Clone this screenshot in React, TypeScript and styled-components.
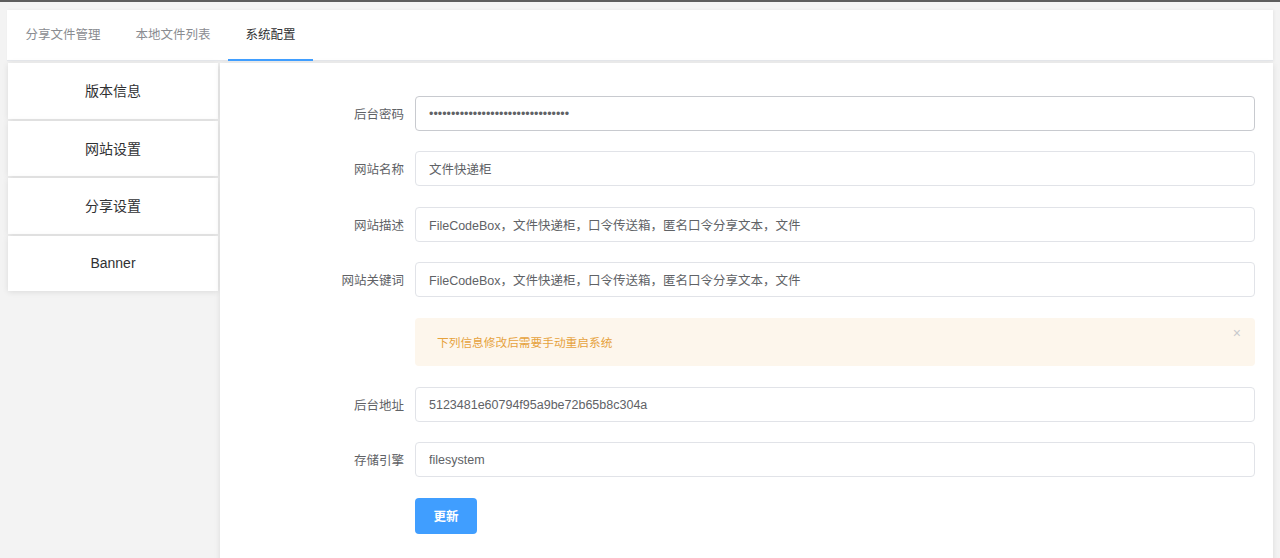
import React from "react";
import styled, { createGlobalStyle } from "styled-components";

const Global = createGlobalStyle`
  html, body { margin: 0; padding: 0; }
  body {
    background: #f3f3f3;
    font-family: "Liberation Sans", "Noto Sans CJK SC", sans-serif;
    color: #303133;
  }
  * { box-sizing: border-box; }
`;

const TopLine = styled.div`
  height: 2px;
  background: #5d5d5d;
`;

const Page = styled.div`
  padding: 8px 7px 0 7px;
  min-height: 556px;
  display: flex;
  flex-direction: column;
`;

const TabBar = styled.div`
  height: 51px;
  background: #fff;
  border-bottom: 1px solid #e6e8ec;
  box-shadow: 1px 0 3px rgba(0, 0, 0, 0.06);
  display: flex;
  align-items: stretch;
  padding-left: 1px;
`;

const Tab = styled.div<{ $active?: boolean }>`
  position: relative;
  padding: 0 17.5px 3px;
  display: flex;
  align-items: center;
  font-size: 12.5px;
  color: ${(p) => (p.$active ? "#303133" : "#8a8c91")};
  &::after {
    content: "";
    display: ${(p) => (p.$active ? "block" : "none")};
    position: absolute;
    left: 0;
    right: 0;
    bottom: -1px;
    height: 2px;
    background: #409eff;
  }
`;

const Body = styled.div`
  flex: 1;
  display: flex;
  gap: 2px;
  margin-top: 2px;
  align-items: flex-start;
`;

const Side = styled.div`
  width: 210px;
  margin-left: 1px;
  display: flex;
  flex-direction: column;
  gap: 2px;
`;

const SideItem = styled.div`
  height: 55.5px;
  background: #fff;
  box-shadow: 0 1px 6px rgba(0, 0, 0, 0.1);
  display: flex;
  align-items: center;
  justify-content: center;
  padding-bottom: 1px;
  font-size: 14px;
  color: #303133;
`;

const Panel = styled.div`
  flex: 1;
  align-self: stretch;
  min-height: 495px;
  background: #fff;
  box-shadow: 0 1px 6px rgba(0, 0, 0, 0.1);
  padding: 33px 18px 20px 75px;
`;

const Row = styled.div`
  display: flex;
  align-items: center;
  margin-bottom: 20.4px;
`;

const Label = styled.label`
  width: 120px;
  flex: none;
  text-align: right;
  padding-right: 11px;
  font-size: 12.5px;
  color: #606266;
`;

const Input = styled.input<{ $hover?: boolean }>`
  flex: 1;
  height: 35px;
  border: 1px solid ${(p) => (p.$hover ? "#c8cacf" : "#e1e3e8")};
  border-radius: 4px;
  padding: 0 13px;
  font-family: "Liberation Sans", "Noto Sans CJK SC", sans-serif;
  font-size: 12.5px;
  color: #606266;
  outline: none;
  background: #fff;
`;

const Offset = styled.div`
  margin-left: 120px;
  margin-bottom: 21.5px;
`;

const Alert = styled.div`
  position: relative;
  height: 48px;
  background: #fdf6ec;
  border-radius: 4px;
  display: flex;
  align-items: center;
  padding: 0 22px;
  font-size: 11.7px;
  color: #e6a23c;
`;

const Close = styled.span`
  position: absolute;
  right: 14px;
  top: 8px;
  font-size: 14px;
  color: #c8c9cc;
  line-height: 1;
`;

const Button = styled.button`
  width: 62px;
  height: 36px;
  border: none;
  border-radius: 4px;
  background: #409eff;
  color: #fff;
  font-family: "Liberation Sans", "Noto Sans CJK SC", sans-serif;
  font-size: 12.5px;
  font-weight: bold;
  cursor: pointer;
`;

const tabs = ["分享文件管理", "本地文件列表", "系统配置"];
const side = ["版本信息", "网站设置", "分享设置", "Banner"];

export default function App() {
  return (
    <>
      <Global />
      <TopLine />
      <Page>
        <TabBar>
          {tabs.map((t, i) => (
            <Tab key={t} $active={i === 2}>
              {t}
            </Tab>
          ))}
        </TabBar>
        <Body>
          <Side>
            {side.map((s) => (
              <SideItem key={s}>{s}</SideItem>
            ))}
          </Side>
          <Panel>
            <Row>
              <Label>后台密码</Label>
              <Input $hover type="password" readOnly value="12345678901234567890123456789012" />
            </Row>
            <Row>
              <Label>网站名称</Label>
              <Input readOnly value="文件快递柜" />
            </Row>
            <Row>
              <Label>网站描述</Label>
              <Input readOnly value="FileCodeBox，文件快递柜，口令传送箱，匿名口令分享文本，文件" />
            </Row>
            <Row>
              <Label>网站关键词</Label>
              <Input readOnly value="FileCodeBox，文件快递柜，口令传送箱，匿名口令分享文本，文件" />
            </Row>
            <Offset>
              <Alert>
                下列信息修改后需要手动重启系统
                <Close>×</Close>
              </Alert>
            </Offset>
            <Row>
              <Label>后台地址</Label>
              <Input readOnly value="5123481e60794f95a9be72b65b8c304a" />
            </Row>
            <Row>
              <Label>存储引擎</Label>
              <Input readOnly value="filesystem" />
            </Row>
            <Offset>
              <Button>更新</Button>
            </Offset>
          </Panel>
        </Body>
      </Page>
    </>
  );
}
